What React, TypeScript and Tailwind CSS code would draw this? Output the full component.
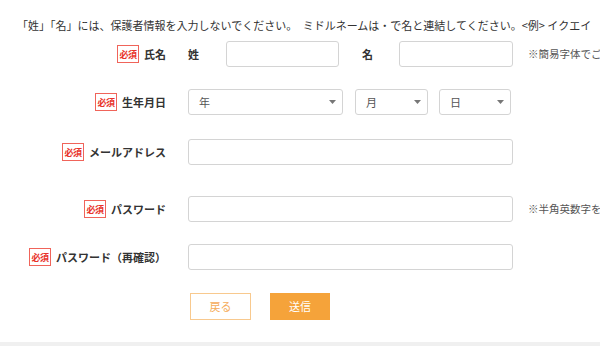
const font = { fontFamily: '"Noto Sans CJK JP", "Noto Sans", sans-serif' }

function Badge() {
  return (
    <span className="inline-flex h-[18px] w-[22px] shrink-0 items-center justify-center border border-[#f0645a] text-[9px] font-bold leading-none tracking-[-0.5px] text-[#e8322a]">
      必須
    </span>
  )
}

function Label({ text }: { text: string }) {
  return (
    <div className="flex w-[166px] shrink-0 items-center justify-end gap-[5px]">
      <Badge />
      <span className="whitespace-nowrap text-[11px] font-bold text-[#333]">{text}</span>
    </div>
  )
}

function Input({ className = '' }: { className?: string }) {
  return <div className={`h-[26px] shrink-0 rounded-[3px] border border-[#d4d4d4] bg-white ${className}`} />
}

function Select({ text, className = '' }: { text: string; className?: string }) {
  return (
    <div className={`flex h-[26px] shrink-0 items-center justify-between rounded-[3px] border border-[#d4d4d4] bg-white pl-[10px] pr-[6px] ${className}`}>
      <span className="text-[11px] text-[#555]">{text}</span>
      <svg width="7" height="4" viewBox="0 0 7 4">
        <path d="M0 0h7L3.5 4z" fill="#777" />
      </svg>
    </div>
  )
}

export default function App() {
  return (
    <div className="relative h-[346px] w-[600px] overflow-hidden bg-white text-[#333]" style={font}>
      <p className="whitespace-nowrap pl-[17px] pt-[17px] text-[11px] leading-[16px] text-[#333]">
        「姓」「名」には、保護者情報を入力しないでください。　ミドルネームは・で名と連結してください。&lt;例&gt; イクエイ
      </p>

      <div className="mt-[8px] flex h-[26px] items-center">
        <Label text="氏名" />
        <div className="ml-[22px] flex items-center">
          <span className="w-[38px] shrink-0 text-[11px] font-bold">姓</span>
          <Input className="w-[113px]" />
          <span className="ml-[23px] w-[37px] shrink-0 text-[11px] font-bold">名</span>
          <Input className="w-[114px]" />
          <span className="ml-[15px] whitespace-nowrap text-[10.5px] text-[#555]">※簡易字体でご入力ください。</span>
        </div>
      </div>

      <div className="mt-[22px] flex h-[26px] items-center">
        <Label text="生年月日" />
        <div className="ml-[22px] flex items-center">
          <Select text="年" className="w-[155px]" />
          <Select text="月" className="ml-[12px] w-[73px]" />
          <Select text="日" className="ml-[11px] w-[72px]" />
        </div>
      </div>

      <div className="mt-[24px] flex h-[26px] items-center">
        <Label text="メールアドレス" />
        <Input className="ml-[22px] w-[325px]" />
      </div>

      <div className="mt-[31px] flex h-[26px] items-center">
        <Label text="パスワード" />
        <Input className="ml-[22px] w-[325px]" />
        <span className="ml-[15px] whitespace-nowrap text-[10.5px] text-[#555]">※半角英数字を含む8文字以上</span>
      </div>

      <div className="mt-[22px] flex h-[26px] items-center">
        <Label text="パスワード（再確認）" />
        <Input className="ml-[22px] w-[325px]" />
      </div>

      <div className="ml-[190px] mt-[23px] flex gap-[19px]">
        <button className="flex h-[27px] w-[61px] items-center justify-center border border-[#f8c98e] bg-white text-[11px] text-[#f5ac5a]">
          戻る
        </button>
        <button className="flex h-[27px] w-[60px] items-center justify-center border border-[#f5a33a] bg-[#f5a33a] text-[11px] text-white">
          送信
        </button>
      </div>

      <div className="absolute bottom-0 left-0 h-[4px] w-full bg-[#f0f0f0]" />
    </div>
  )
}
